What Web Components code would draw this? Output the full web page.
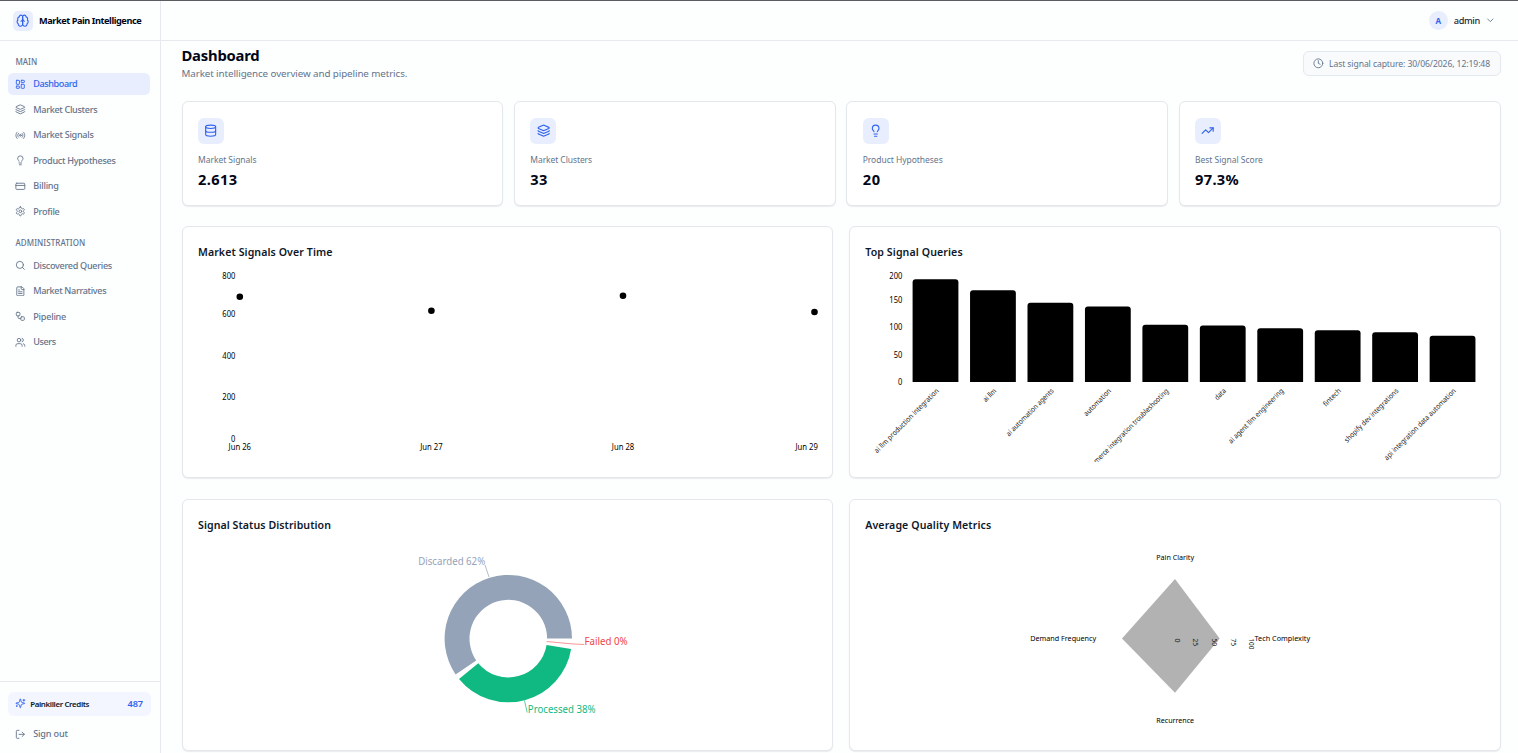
<!DOCTYPE html>
<html lang="en">
<head>
<meta charset="utf-8">
<title>Market Pain Intelligence</title>
<style>
  html, body { margin: 0; height: 100%; overflow: hidden; }
  body { font-family: "Noto Sans", "Open Sans", sans-serif; background: #fdfefe; color: #020617; }
</style>
</head>
<body>
<mp-app></mp-app>
<script>
const ICONS = {
  brain: '<path d="M12 5a3 3 0 1 0-5.997.125 4 4 0 0 0-2.526 5.77 4 4 0 0 0 .556 6.588A4 4 0 1 0 12 18Z"/><path d="M12 5a3 3 0 1 1 5.997.125 4 4 0 0 1 2.526 5.77 4 4 0 0 1-.556 6.588A4 4 0 1 1 12 18Z"/><path d="M15 13a4.5 4.5 0 0 1-3-4 4.5 4.5 0 0 1-3 4"/>',
  dashboard: '<rect x="3" y="3" width="7" height="9" rx="1"/><rect x="14" y="3" width="7" height="5" rx="1"/><rect x="14" y="12" width="7" height="9" rx="1"/><rect x="3" y="16" width="7" height="5" rx="1"/>',
  layers: '<path d="M12.83 2.18a2 2 0 0 0-1.66 0L2.6 6.08a1 1 0 0 0 0 1.83l8.58 3.91a2 2 0 0 0 1.66 0l8.58-3.9a1 1 0 0 0 0-1.83z"/><path d="M2 12a1 1 0 0 0 .58.91l8.6 3.91a2 2 0 0 0 1.65 0l8.58-3.9A1 1 0 0 0 22 12"/><path d="M2 17a1 1 0 0 0 .58.91l8.6 3.91a2 2 0 0 0 1.65 0l8.58-3.9A1 1 0 0 0 22 17"/>',
  radio: '<path d="M4.9 19.1C1 15.2 1 8.8 4.9 4.9"/><path d="M7.8 16.2c-2.3-2.3-2.3-6.1 0-8.5"/><circle cx="12" cy="12" r="2"/><path d="M16.2 7.8c2.3 2.3 2.3 6.1 0 8.5"/><path d="M19.1 4.9C23 8.8 23 15.1 19.1 19"/>',
  bulb: '<path d="M15 14c.2-1 .7-1.7 1.5-2.5 1-.9 1.5-2.2 1.5-3.5A6 6 0 0 0 6 8c0 1 .2 2.2 1.5 3.5.7.7 1.3 1.5 1.5 2.5"/><path d="M9 18h6"/><path d="M10 22h4"/>',
  card: '<rect x="2" y="5" width="20" height="14" rx="2"/><path d="M2 10h20"/>',
  gear: '<path d="M12.22 2h-.44a2 2 0 0 0-2 2v.18a2 2 0 0 1-1 1.73l-.43.25a2 2 0 0 1-2 0l-.15-.08a2 2 0 0 0-2.73.73l-.22.38a2 2 0 0 0 .73 2.73l.15.1a2 2 0 0 1 1 1.72v.51a2 2 0 0 1-1 1.74l-.15.09a2 2 0 0 0-.73 2.73l.22.38a2 2 0 0 0 2.73.73l.15-.08a2 2 0 0 1 2 0l.43.25a2 2 0 0 1 1 1.73V20a2 2 0 0 0 2 2h.44a2 2 0 0 0 2-2v-.18a2 2 0 0 1 1-1.73l.43-.25a2 2 0 0 1 2 0l.15.08a2 2 0 0 0 2.73-.73l.22-.39a2 2 0 0 0-.73-2.73l-.15-.08a2 2 0 0 1-1-1.74v-.5a2 2 0 0 1 1-1.74l.15-.09a2 2 0 0 0 .73-2.73l-.22-.38a2 2 0 0 0-2.73-.73l-.15.08a2 2 0 0 1-2 0l-.43-.25a2 2 0 0 1-1-1.73V4a2 2 0 0 0-2-2z"/><circle cx="12" cy="12" r="3"/>',
  search: '<circle cx="11" cy="11" r="8"/><path d="m21 21-4.3-4.3"/>',
  file: '<path d="M15 2H6a2 2 0 0 0-2 2v16a2 2 0 0 0 2 2h12a2 2 0 0 0 2-2V7Z"/><path d="M14 2v4a2 2 0 0 0 2 2h4"/><path d="M10 9H8"/><path d="M16 13H8"/><path d="M16 17H8"/>',
  workflow: '<rect x="3" y="3" width="8" height="8" rx="2"/><path d="M7 11v4a2 2 0 0 0 2 2h4"/><rect x="13" y="13" width="8" height="8" rx="2"/>',
  users: '<path d="M16 21v-2a4 4 0 0 0-4-4H6a4 4 0 0 0-4 4v2"/><circle cx="9" cy="7" r="4"/><path d="M22 21v-2a4 4 0 0 0-3-3.87"/><path d="M16 3.13a4 4 0 0 1 0 7.75"/>',
  sparkles: '<path d="M9.94 15.5A2 2 0 0 0 8.5 14.06l-6.14-1.58a.5.5 0 0 1 0-.96L8.5 9.94A2 2 0 0 0 9.94 8.5l1.58-6.14a.5.5 0 0 1 .96 0L14.06 8.5A2 2 0 0 0 15.5 9.94l6.14 1.58a.5.5 0 0 1 0 .96L15.5 14.06a2 2 0 0 0-1.44 1.44l-1.58 6.14a.5.5 0 0 1-.96 0z"/><path d="M20 3v4"/><path d="M22 5h-4"/><path d="M4 17v2"/><path d="M5 18H3"/>',
  logout: '<path d="M9 21H5a2 2 0 0 1-2-2V5a2 2 0 0 1 2-2h4"/><path d="m16 17 5-5-5-5"/><path d="M21 12H9"/>',
  database: '<ellipse cx="12" cy="5" rx="9" ry="3"/><path d="M3 5v14a9 3 0 0 0 18 0V5"/><path d="M3 12a9 3 0 0 0 18 0"/>',
  trend: '<path d="M22 7l-8.5 8.5-5-5L2 17"/><path d="M16 7h6v6"/>',
  clock: '<circle cx="12" cy="12" r="10"/><path d="M12 6v6l4 2"/>',
  chevron: '<path d="m6 9 6 6 6-6"/>'
};

function define(name, render, after) {
  customElements.define(name, class extends HTMLElement {
    connectedCallback() {
      if (this.shadowRoot) return;
      const root = this.attachShadow({ mode: 'open' });
      const t = document.createElement('template');
      t.innerHTML = render(this);
      root.append(t.content.cloneNode(true));
      if (after) after(this, root);
    }
  });
}

define('mp-icon', el => {
  const s = el.getAttribute('size') || 10.67;
  return `<style>:host{display:block;flex:none;width:${s}px;height:${s}px}svg{display:block}</style>
  <svg width="${s}" height="${s}" viewBox="0 0 24 24" fill="none" stroke="currentColor" stroke-width="2" stroke-linecap="round" stroke-linejoin="round">${ICONS[el.getAttribute('name')]}</svg>`;
});

/* One line of text, tracked so that it fills the width given in w. */
define('mp-text', el => `<style>:host{display:block;flex:none;white-space:nowrap}span{display:inline-block}</style><span>${el.getAttribute('text')}</span>`,
  (el, root) => {
    const span = root.querySelector('span');
    const w = parseFloat(el.getAttribute('w'));
    if (!w) return;
    el.style.width = w + 'px';
    span.style.letterSpacing = (w - span.getBoundingClientRect().width) / span.textContent.length + 'px';
  });

define('mp-nav-item', el => `<style>
  :host{display:flex;align-items:center;height:22px;padding-left:7px;gap:7.6px;border-radius:5.5px;color:#64748b;font-size:9.1px;font-weight:500;line-height:22px}
  :host([active]){background:#e8eefd;color:#2f62ee}
  </style><mp-icon name="${el.getAttribute('icon')}"></mp-icon><mp-text text="${el.getAttribute('label')}" w="${el.getAttribute('w')}"></mp-text>`);

define('mp-sidebar', () => `<style>
  :host{display:flex;flex-direction:column;width:160px;border-right:1px solid #e6e9ee;background:#fdfefe;box-sizing:content-box}
  .brand{display:flex;align-items:center;gap:6px;height:39px;padding-left:13px;border-bottom:1px solid #e6e9ee;font-size:9.2px;font-weight:700;line-height:20px}
  .logo{width:20px;height:20px;border-radius:5px;background:#e8eefd;color:#2f62ee;display:grid;place-items:center}
  nav{flex:1;padding:12.7px 10px 0 8px}
  .sec{font-size:8px;font-weight:500;color:#64748b;line-height:16px;padding-left:7.5px;height:19.5px}
  .list{display:grid;gap:3.5px;margin-bottom:12.4px}
  footer{border-top:1px solid #e6e9ee;padding:10px 9px 8px 8px}
  .credits{display:flex;align-items:center;height:24px;border-radius:6px;background:#f3f6fe;padding:0 8px 0 7px;gap:4.5px;font-size:7.9px;font-weight:600;color:#0f172a}
  .credits b{margin-left:auto;color:#2f62ee;font-size:9.2px;font-weight:600}
  .credits mp-icon{color:#2f62ee}
  .out{margin-top:7.5px}
  </style>
  <div class="brand"><div class="logo"><mp-icon name="brain" size="13.3"></mp-icon></div><mp-text text="Market Pain Intelligence" w="102.3"></mp-text></div>
  <nav>
    <div class="sec"><mp-text text="MAIN" w="21.7"></mp-text></div>
    <div class="list">
      <mp-nav-item active icon="dashboard" label="Dashboard" w="44"></mp-nav-item>
      <mp-nav-item icon="layers" label="Market Clusters" w="64"></mp-nav-item>
      <mp-nav-item icon="radio" label="Market Signals" w="60.3"></mp-nav-item>
      <mp-nav-item icon="bulb" label="Product Hypotheses" w="82.3"></mp-nav-item>
      <mp-nav-item icon="card" label="Billing" w="25.5"></mp-nav-item>
      <mp-nav-item icon="gear" label="Profile" w="26.3"></mp-nav-item>
    </div>
    <div class="sec"><mp-text text="ADMINISTRATION" w="69.8"></mp-text></div>
    <div class="list">
      <mp-nav-item icon="search" label="Discovered Queries" w="78.7"></mp-nav-item>
      <mp-nav-item icon="file" label="Market Narratives" w="73"></mp-nav-item>
      <mp-nav-item icon="workflow" label="Pipeline" w="32.8"></mp-nav-item>
      <mp-nav-item icon="users" label="Users" w="22.5"></mp-nav-item>
    </div>
  </nav>
  <footer>
    <div class="credits"><mp-icon name="sparkles"></mp-icon><mp-text text="Painkiller Credits" w="59"></mp-text><b><mp-text text="487" w="15.5"></mp-text></b></div>
    <mp-nav-item class="out" icon="logout" label="Sign out" w="34.5"></mp-nav-item>
  </footer>`);

define('mp-topbar', () => `<style>
  :host{display:flex;align-items:center;justify-content:flex-end;height:39px;border-bottom:1px solid #e6e9ee;padding-right:22.5px;font-size:9.2px;font-weight:500;color:#1e293b}
  .av{width:19px;height:19px;border-radius:50%;background:#e8eefd;color:#2f62ee;font-size:8px;font-weight:700;display:grid;place-items:center;margin-right:6px}
  mp-icon{margin-left:5px;color:#64748b}
  </style><div class="av">A</div><mp-text text="admin" w="26"></mp-text><mp-icon name="chevron" size="10.67"></mp-icon>`);

define('mp-stat', el => `<style>
  :host{display:block;box-sizing:border-box;height:105px;background:#fff;border:1px solid #e4e8ec;border-radius:6px;box-shadow:0 1px 1px rgba(15,23,42,.08);padding:15.5px 15.5px}
  .ic{width:26px;height:26px;border-radius:6px;background:#e8eefd;color:#2f62ee;display:grid;place-items:center}
  .l{margin-top:9.5px;font-size:8.5px;line-height:13px;color:#64748b}
  .v{margin-top:1px;font-size:14.6px;line-height:24px;font-weight:700}
  </style><div class="ic"><mp-icon name="${el.getAttribute('icon')}" size="13.3"></mp-icon></div>
  <div class="l"><mp-text text="${el.getAttribute('label')}" w="${el.getAttribute('lw')}"></mp-text></div>
  <div class="v"><mp-text text="${el.getAttribute('value')}" w="${el.getAttribute('vw')}"></mp-text></div>`);

define('mp-panel', el => `<style>
  :host{display:flex;flex-direction:column;box-sizing:border-box;min-width:0;height:252px;background:#fff;border:1px solid #e4e8ec;border-radius:6px;box-shadow:0 1px 1px rgba(15,23,42,.08);padding:16.8px 15.5px 14px}
  .t{font-size:10.6px;font-weight:600;line-height:17px;color:#0f172a;height:26.2px}
  ::slotted(*){flex:none}
  </style><div class="t"><mp-text text="${el.getAttribute('label')}" w="${el.getAttribute('w')}"></mp-text></div><slot></slot>`);

const label = (x, y, t, w, extra = '') => `<text x="${x}" y="${y}" textLength="${w}" lengthAdjust="spacingAndGlyphs" ${extra}>${t}</text>`;
const chart = (box, fs, body) => `<style>:host{display:block}svg{display:block;font-size:${fs}px}</style>
  <svg width="${box[2]}" height="${box[3]}" viewBox="${box.join(' ')}">${body}</svg>`;

define('mp-line-chart', () => {
  let b = '';
  [[276, '800', 13], [314.5, '600', 13], [356, '400', 13], [397.5, '200', 13], [439, '0', 4.3]].forEach(([y, t, w]) => b += label(235.3, y + 2.8, t, w, 'text-anchor="end"'));
  [[239.8, '26'], [431.4, '27'], [623, '28'], [806.6, '29']].forEach(([x, d]) => b += label(x, 450.2, 'Jun ' + d, 22.4, 'text-anchor="middle"'));
  [[239.8, 296.7], [431.4, 310.8], [623, 295.7], [814.5, 312]].forEach(([x, y]) => b += `<circle cx="${x}" cy="${y}" r="3.3"/>`);
  return chart([198, 270, 620, 192], 8, b);
});

define('mp-bar-chart', () => {
  let b = '';
  [[276, '200', 13], [300.5, '150', 13], [327.5, '100', 13], [354.7, '50', 8.6], [382, '0', 4.3]].forEach(([y, t, w]) => b += label(902.3, y + 2.8, t, w, 'text-anchor="end"'));
  [[279.3, 'ai llm production integration', 88], [290.3, 'ai llm', 15.5], [302.7, 'ai automation agents', 64], [306.5, 'automation', 35.5],
   [324.8, 'ecommerce integration troubleshooting', 119], [325.4, 'data', 12.8], [328.3, 'ai agent llm engineering', 74.5], [330.3, 'fintech', 22],
   [332.3, 'shopify dev integrations', 73], [335.8, 'api integration data automation', 98]].forEach(([top, t, w], i) => {
    const x = 912.6 + i * 57.45, r = x + 45.8, ax = (x + 26.7).toFixed(1);
    b += `<path d="M${x} 382V${top + 3}q0-3 3-3H${r - 3}q3 0 3 3V382z"/>`;
    b += label(ax, 391.4, t, w, `text-anchor="end" font-size="7.3" fill="#222" transform="rotate(-45 ${ax} 391.4)"`);
  });
  return chart([865, 270, 620, 192], 8, b);
});

define('mp-donut', () => {
  const cx = 508.3, cy = 638.6, R = 63.7, r = 38.8;
  const p = (rad, a) => `${(cx + rad * Math.cos(a * Math.PI / 180)).toFixed(2)} ${(cy - rad * Math.sin(a * Math.PI / 180)).toFixed(2)}`;
  const arc = (a, z, c) => { const l = z - a > 180 ? 1 : 0; return `<path fill="${c}" d="M${p(R, a)}A${R} ${R} 0 ${l} 0 ${p(R, z)}L${p(r, z)}A${r} ${r} 0 ${l} 1 ${p(r, a)}Z"/>`; };
  return chart([198, 543, 620, 192], 10.6,
    arc(0, 214.2, '#94a3b8') + arc(219.3, 350.6, '#10b981') +
    `<g fill="none" stroke-width=".7"><path stroke="#94a3b8" d="M489 577l-4-12"/><path stroke="#10b981" d="M524.5 700.5l2.7 12"/><path stroke="#ef4444" stroke-opacity=".8" d="M546.7 641.5l25.5 2.4 12 .6"/></g>` +
    label(418.2, 565.2, 'Discarded 62%', 67, 'fill="#94a3b8"') + label(584.6, 645.2, 'Failed 0%', 43, 'fill="#ef4444"') + label(527.8, 713.2, 'Processed 38%', 67.8, 'fill="#10b981"'));
});

define('mp-radar', () => {
  let b = '<path fill="#b2b2b2" d="M1175 579l44.7 59.5L1175 692.8l-53-54.3z"/>';
  b += label(1175.2, 559.5, 'Pain Clarity', 37.8, 'text-anchor="middle"') + label(1175.2, 723.4, 'Recurrence', 37.8, 'text-anchor="middle"') +
    label(1254.6, 641.3, 'Tech Complexity', 55.5) + label(1030.2, 641.3, 'Demand Frequency', 66);
  [[1174.9, '0', 4], [1192.6, '25', 7.6], [1212, '50', 7.6], [1230.5, '75', 7.6], [1248.9, '100', 11]].forEach(([x, t, w]) =>
    b += label(x, 638.4, t, w, `font-size="7.4" fill="#222" transform="rotate(90 ${x} 638.4)"`));
  return chart([865, 543, 620, 192], 7.9, b);
});

define('mp-app', () => `<style>
  :host{display:flex;height:753px;box-sizing:border-box;border-top:1px solid #5c5c60;overflow:hidden}
  .col{flex:1;min-width:0;display:flex;flex-direction:column}
  main{padding:5px 17.5px 0 20.5px}
  .head{display:flex;justify-content:space-between;height:55px}
  h1{margin:-.7px 0 .7px;font-size:14.8px;font-weight:700;line-height:20px}
  .sub{font-size:9.8px;line-height:15px;color:#64748b}
  .cap{display:flex;align-items:center;gap:5px;box-sizing:border-box;height:25px;margin-top:5px;padding:0 9.5px;border:1px solid #e4e9ef;border-radius:6px;background:#f8fafc;color:#64748b;font-size:8.6px}
  .stats{display:grid;grid-template-columns:repeat(4,minmax(0,1fr));gap:10.4px}
  .panels{display:grid;grid-template-columns:repeat(2,minmax(0,1fr));gap:21px 15.5px;margin-top:20px}
  </style>
  <mp-sidebar></mp-sidebar>
  <div class="col">
    <mp-topbar></mp-topbar>
    <main>
      <div class="head">
        <div><h1><mp-text text="Dashboard" w="78"></mp-text></h1><div class="sub"><mp-text text="Market intelligence overview and pipeline metrics." w="225.8"></mp-text></div></div>
        <div class="cap"><mp-icon name="clock"></mp-icon><mp-text text="Last signal capture: 30/06/2026, 12:19:48" w="161"></mp-text></div>
      </div>
      <div class="stats">
        <mp-stat icon="database" label="Market Signals" lw="58.5" value="2.613" vw="39.6"></mp-stat>
        <mp-stat icon="layers" label="Market Clusters" lw="61.7" value="33" vw="17.5"></mp-stat>
        <mp-stat icon="bulb" label="Product Hypotheses" lw="80" value="20" vw="18"></mp-stat>
        <mp-stat icon="trend" label="Best Signal Score" lw="67.7" value="97.3%" vw="44"></mp-stat>
      </div>
      <div class="panels">
        <mp-panel label="Market Signals Over Time" w="134.5"><mp-line-chart></mp-line-chart></mp-panel>
        <mp-panel label="Top Signal Queries" w="97.5"><mp-bar-chart></mp-bar-chart></mp-panel>
        <mp-panel label="Signal Status Distribution" w="133"><mp-donut></mp-donut></mp-panel>
        <mp-panel label="Average Quality Metrics" w="126"><mp-radar></mp-radar></mp-panel>
      </div>
    </main>
  </div>`);
</script>
</body>
</html>
